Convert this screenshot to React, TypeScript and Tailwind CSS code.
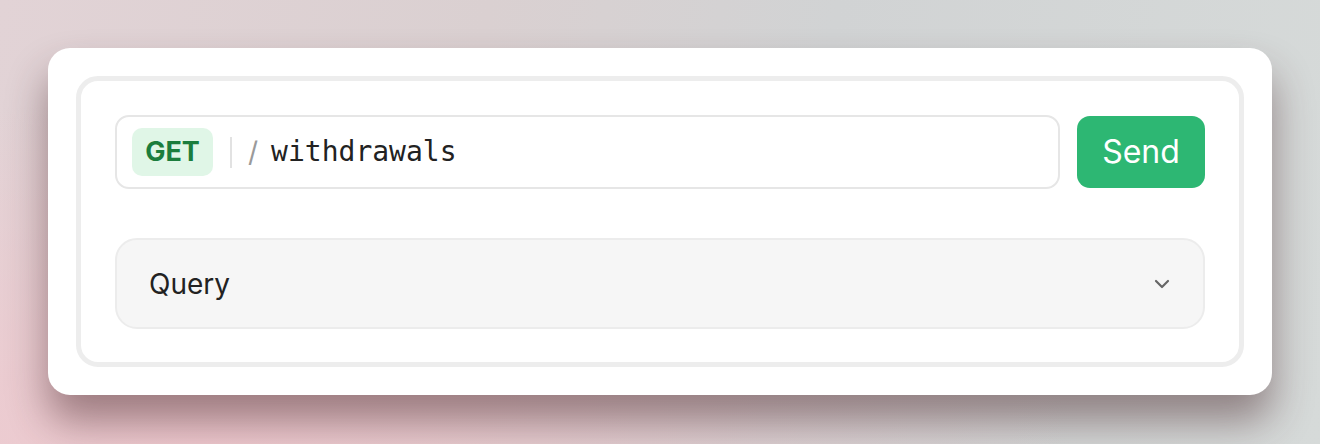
import { ChevronDown } from "lucide-react";

const sans = { fontFamily: "Inter, 'Noto Sans', sans-serif" };

export default function App() {
  return (
    <div className="h-[444px] w-[1320px] bg-[radial-gradient(ellipse_at_15%_100%,#efc9cf_0%,rgba(239,201,207,0)_55%),linear-gradient(100deg,#e2d3d6_0%,#dad0d1_35%,#d1d3d4_60%,#d6dad9_100%)] p-12 font-[Inter,'Noto_Sans',sans-serif]">
      <div className="rounded-[22px] bg-white p-7 shadow-[0_26px_40px_rgba(70,35,40,0.48)]">
        <div className="rounded-[22px] border-[5px] border-[#ededed] bg-white px-[34px] pt-[34px] pb-[33px]">
          {/* request line */}
          <div className="flex items-center gap-[17px]">
            <div className="flex h-[74px] flex-1 items-center rounded-[14px] border-2 border-[#e6e6e6] pl-[15px]">
              <span className="flex h-12 w-[81px] items-center justify-center rounded-[10px] bg-[#e0f6e7] text-[27px] font-bold text-[#1b7d3d]">
                GET
              </span>
              <span className="ml-[17px] h-[31px] w-[2px] bg-[#e2e2e2]" />
              <span className="ml-4 text-[28px] text-[#9a9a9a]">/</span>
              <span className="ml-[13px] font-['DejaVu_Sans_Mono',monospace] text-[28px] text-[#222]">
                withdrawals
              </span>
            </div>
            <button className="flex h-[72px] w-32 items-center justify-center rounded-[13px] bg-[#2db773] text-[32px] text-white">
              Send
            </button>
          </div>

          {/* query section */}
          <div className="mt-[49px] flex h-[91px] items-center justify-between rounded-[22px] border-2 border-[#ececec] bg-[#f6f6f6] pl-8 pr-[29px]">
            <span className="text-[28px] text-[#222]" style={sans}>
              Query
            </span>
            <ChevronDown className="h-6 w-6 text-[#666]" strokeWidth={2.2} />
          </div>
        </div>
      </div>
    </div>
  );
}
